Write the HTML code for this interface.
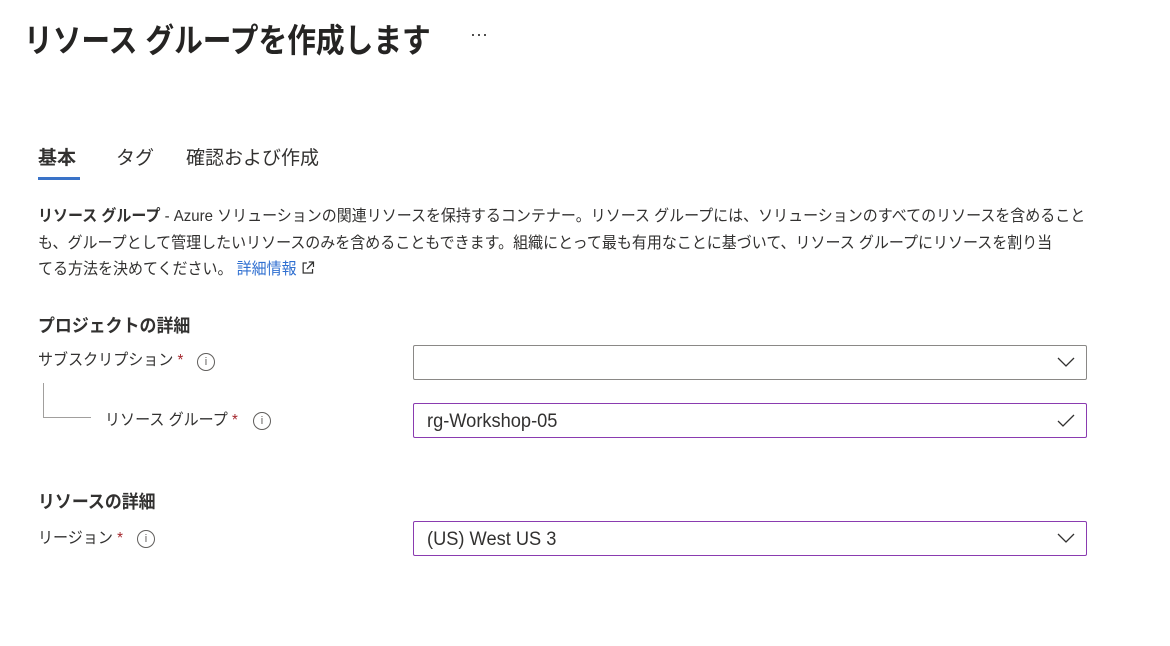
<!DOCTYPE html><html><head><meta charset="utf-8"><style>
body{margin:0;width:1170px;height:646px;background:#fff;font-family:"Liberation Sans","Noto Sans CJK JP",sans-serif;color:#323130;position:relative;overflow:hidden}
.a{position:absolute;white-space:nowrap}
.sx{transform-origin:0 0}
.box{position:absolute;left:413px;width:672px;height:33px;border:1px solid #8a8886;border-radius:2px;box-sizing:content-box}
.box.p{border-color:#8a3bb0}
.box span{position:absolute;left:13px;top:7px;font-size:19px;color:#323130;transform:scaleX(0.96);transform-origin:0 0}
.box svg{position:absolute;right:11px;top:10px}
.req{color:#a4262c}
.i{position:absolute;width:16px;height:16px;border:1.3px solid #605e5c;border-radius:50%;font-size:11px;line-height:16px;text-align:center;color:#605e5c;box-sizing:content-box}
</style></head><body>
<div class="a sx" style="left:24px;top:14px;font-size:33px;font-weight:600;color:#252423;transform:scaleX(0.87)">リソース グループを作成します</div>
<div class="a" style="left:470px;top:24px;font-size:18px;color:#323130">···</div>
<div class="a" style="left:38px;top:143px;font-size:19px;font-weight:600;color:#323130">基本</div>
<div class="a" style="left:38px;top:177px;width:42px;height:3px;background:#3a73c8"></div>
<div class="a" style="left:116px;top:143px;font-size:19px">タグ</div>
<div class="a" style="left:186px;top:143px;font-size:19px">確認および作成</div>
<div class="a sx" style="left:38px;top:202px;font-size:16px;transform:scaleX(0.937)"><b>リソース グループ</b> - Azure ソリューションの関連リソースを保持するコンテナー。リソース グループには、ソリューションのすべてのリソースを含めること</div>
<div class="a sx" style="left:38px;top:229px;font-size:16px;transform:scaleX(0.937)">も、グループとして管理したいリソースのみを含めることもできます。組織にとって最も有用なことに基づいて、リソース グループにリソースを割り当</div>
<div class="a sx" style="left:38px;top:255px;font-size:16px;transform:scaleX(0.937)">てる方法を決めてください。 <span style="color:#2f6fd0">詳細情報</span> <svg width="16" height="16" viewBox="0 0 16 16" style="vertical-align:-2px"><path d="M7 3H3v10h10V9M9 2h5v5M14 2L7 9" fill="none" stroke="#323130" stroke-width="1.3"/></svg></div>
<div class="a sx" style="left:38px;top:312px;font-size:18px;font-weight:bold;transform:scaleX(0.94)">プロジェクトの詳細</div>
<div class="a sx" style="left:38px;top:350px;font-size:16px;line-height:22px;transform:scaleX(0.94)">サブスクリプション <span class="req">*</span></div>
<span class="i" style="left:197px;top:353px">i</span>
<div class="a" style="left:43px;top:383px;width:1px;height:34px;background:#a19f9d"></div>
<div class="a" style="left:43px;top:417px;width:48px;height:1px;background:#a19f9d"></div>
<div class="a sx" style="left:105px;top:410px;font-size:16px;line-height:22px;transform:scaleX(0.94)">リソース グループ <span class="req">*</span></div>
<span class="i" style="left:253px;top:412px">i</span>
<div class="a sx" style="left:38px;top:488px;font-size:18px;font-weight:bold;transform:scaleX(0.94)">リソースの詳細</div>
<div class="a sx" style="left:38px;top:528px;font-size:16px;line-height:22px;transform:scaleX(0.94)">リージョン <span class="req">*</span></div>
<span class="i" style="left:137px;top:530px">i</span>
<div class="box" style="top:345px"><svg width="18" height="12" viewBox="0 0 18 12"><path d="M1 2l8 8 8-8" fill="none" stroke="#323130" stroke-width="1.3"/></svg></div>
<div class="box p" style="top:403px"><span>rg-Workshop-05</span><svg width="18" height="14" viewBox="0 0 18 14"><path d="M1 7l5 5L17 1" fill="none" stroke="#323130" stroke-width="1.3"/></svg></div>
<div class="box p" style="top:521px"><span>(US) West US 3</span><svg width="18" height="12" viewBox="0 0 18 12"><path d="M1 2l8 8 8-8" fill="none" stroke="#323130" stroke-width="1.3"/></svg></div>
</body></html>
